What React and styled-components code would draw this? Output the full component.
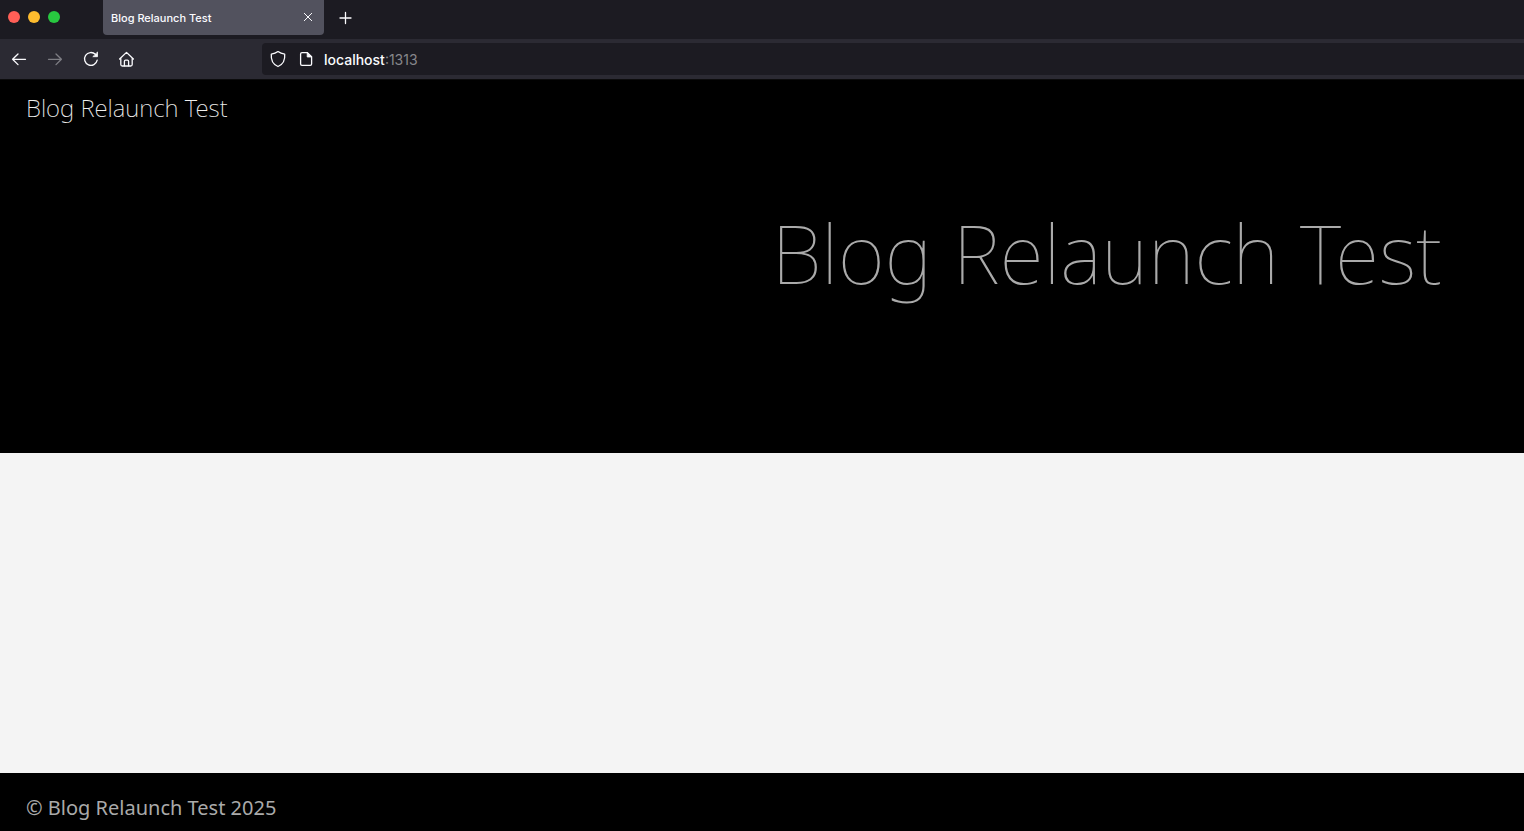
import React from "react";
import styled, { createGlobalStyle } from "styled-components";

const GlobalStyle = createGlobalStyle`
  *, *::before, *::after { box-sizing: border-box; }
  html, body { margin: 0; padding: 0; background: #000; }
  button, input { font: inherit; color: inherit; border: 0; padding: 0; background: none; }
  h1, p { margin: 0; }
`;

const Window = styled.div`
  display: flex;
  flex-direction: column;
  min-height: 100vh;
  overflow-x: hidden;
`;

const TabStrip = styled.div`
  display: flex;
  align-items: flex-start;
  height: 39px;
  padding-left: 8px;
  background: #1c1b22;
  color: #fbfbfe;
  font-family: Inter, "Liberation Sans", sans-serif;
`;

const WindowControls = styled.div`
  display: flex;
  gap: 8px;
  width: 95px;
  padding-top: 11px;
`;

const WindowButton = styled.button`
  width: 12px;
  height: 12px;
  border-radius: 50%;
  background: ${(p) => p.$color};
`;

const Tab = styled.div`
  display: flex;
  align-items: center;
  justify-content: space-between;
  width: 221px;
  height: 35px;
  padding: 0 8px;
  border-radius: 0 0 4px 4px;
  background: #52525e;
  font-size: 11px;
  font-weight: 500;
  line-height: 16px;
`;

const TabButton = styled.button`
  display: flex;
  align-items: center;
  justify-content: center;
  width: ${(p) => p.$width};
  height: 35px;
`;

const NavBar = styled.div`
  display: flex;
  align-items: center;
  height: 41px;
  border-bottom: 1px solid #0c0c0d;
  background: #2b2a33;
  color: #fbfbfe;
  font-family: Inter, "Liberation Sans", sans-serif;
`;

const NavButtons = styled.div`
  display: flex;
  gap: 16px;
  width: 262px;
  padding-left: 9px;
`;

const NavButton = styled.button`
  display: flex;
  width: 20px;
  height: 20px;
  opacity: ${(p) => (p.disabled ? 0.4 : 1)};
`;

const AddressBar = styled.div`
  display: flex;
  flex: 1;
  align-items: center;
  gap: 8px;
  height: 32px;
  padding-left: 6px;
  border-radius: 4px 0 0 4px;
  background: #1c1b22;
`;

const Address = styled.a`
  padding-top: 2px;
  color: #87878c;
  font-size: 14px;
  line-height: 20px;
  text-decoration: none;
`;

const Host = styled.span`
  color: #fbfbfe;
  font-weight: 500;
`;

const Site = styled.div`
  display: flex;
  flex: 1;
  flex-direction: column;
  font-family: "Noto Sans", sans-serif;
`;

const Hero = styled.header`
  padding: 10px 26px 152px;
  background: #000;
`;

const SiteLink = styled.a`
  display: inline-block;
  color: #eee;
  font-size: 24px;
  font-weight: 200;
  line-height: 36px;
  text-decoration: none;
`;

const HeroTitle = styled.h1`
  padding: 79px 56px 0 0;
  color: #aaa;
  font-size: 81px;
  font-weight: 100;
  line-height: 96px;
  text-align: right;
`;

const Content = styled.main`
  flex: 1;
  min-height: 160px;
  background: #f4f4f4;
`;

const Footer = styled.footer`
  padding: 20px 26px 8px;
  background: #000;
  color: #aaa;
  font-size: 20px;
  font-weight: 400;
  line-height: 30px;
`;

function Icon({ size = 20, children }) {
  return (
    <svg
      width={size}
      height={size}
      viewBox={`0 0 ${size} ${size}`}
      fill="none"
      stroke="currentColor"
      strokeWidth="1.3"
      strokeLinecap="round"
      strokeLinejoin="round"
      aria-hidden="true"
    >
      {children}
    </svg>
  );
}

const windowControls = [
  { label: "Close window", color: "#ff5f57" },
  { label: "Minimize window", color: "#febc2e" },
  { label: "Zoom window", color: "#28c840" },
];

export default function App() {
  return (
    <Window>
      <GlobalStyle />
      <TabStrip>
        <WindowControls>
          {windowControls.map((c) => (
            <WindowButton key={c.label} aria-label={c.label} $color={c.color} />
          ))}
        </WindowControls>
        <Tab>
          <span>Blog Relaunch Test</span>
          <TabButton $width="16px" aria-label="Close tab">
            <Icon size={16}>
              <path d="M4.3 3.3L11.7 10.7M11.7 3.3L4.3 10.7" strokeWidth="1" />
            </Icon>
          </TabButton>
        </Tab>
        <TabButton $width="44px" aria-label="New tab">
          <Icon size={16}>
            <path d="M7.5 2.5V13.5M2 8H13" />
          </Icon>
        </TabButton>
      </TabStrip>

      <NavBar>
        <NavButtons>
          <NavButton aria-label="Back">
            <Icon><path d="M16.5 10.3H3.6M9 5L3.6 10.3L9 15.6" /></Icon>
          </NavButton>
          <NavButton aria-label="Forward" disabled>
            <Icon><path d="M3.5 10.3H16.4M11 5L16.4 10.3L11 15.6" /></Icon>
          </NavButton>
          <NavButton aria-label="Reload">
            <Icon>
              <path d="M16.2 11.2A6.4 6.4 0 1 1 14.4 5.3" />
              <path d="M16.5 3.4V7.7H12.2Z" fill="currentColor" strokeWidth="0.8" />
            </Icon>
          </NavButton>
          <NavButton aria-label="Home">
            <Icon>
              <path d="M2.6 10L9.5 3.4L16.4 10M3.8 9V15.5Q3.8 17 5.3 17H13.7Q15.2 17 15.2 15.5V9" />
              <path d="M7.4 16.8V12.6Q7.4 11.2 8.6 11.2H10.4Q11.6 11.2 11.6 12.6V16.8" />
            </Icon>
          </NavButton>
        </NavButtons>
        <AddressBar>
          <Icon>
            <path d="M10 2.6C12 4.2 14.3 4.9 16.7 5.1C17.2 10.8 14.6 15.6 10 17.5C5.4 15.6 2.8 10.8 3.3 5.1C5.7 4.9 8 4.2 10 2.6Z" />
          </Icon>
          <Icon>
            <path d="M11.4 3.6H6Q4.6 3.6 4.6 5V15Q4.6 16.4 6 16.4H14.2Q15.6 16.4 15.6 15V7.8Z" />
            <path d="M11.2 3.6V8H15.6Z" fill="currentColor" strokeWidth="0.8" />
          </Icon>
          <Address href="http://localhost:1313">
            <Host>localhost</Host>:1313
          </Address>
        </AddressBar>
      </NavBar>

      <Site>
        <Hero>
          <SiteLink href="/">Blog Relaunch Test</SiteLink>
          <HeroTitle>Blog Relaunch Test</HeroTitle>
        </Hero>
        <Content />
        <Footer>
          <p>© Blog Relaunch Test 2025</p>
        </Footer>
      </Site>
    </Window>
  );
}
